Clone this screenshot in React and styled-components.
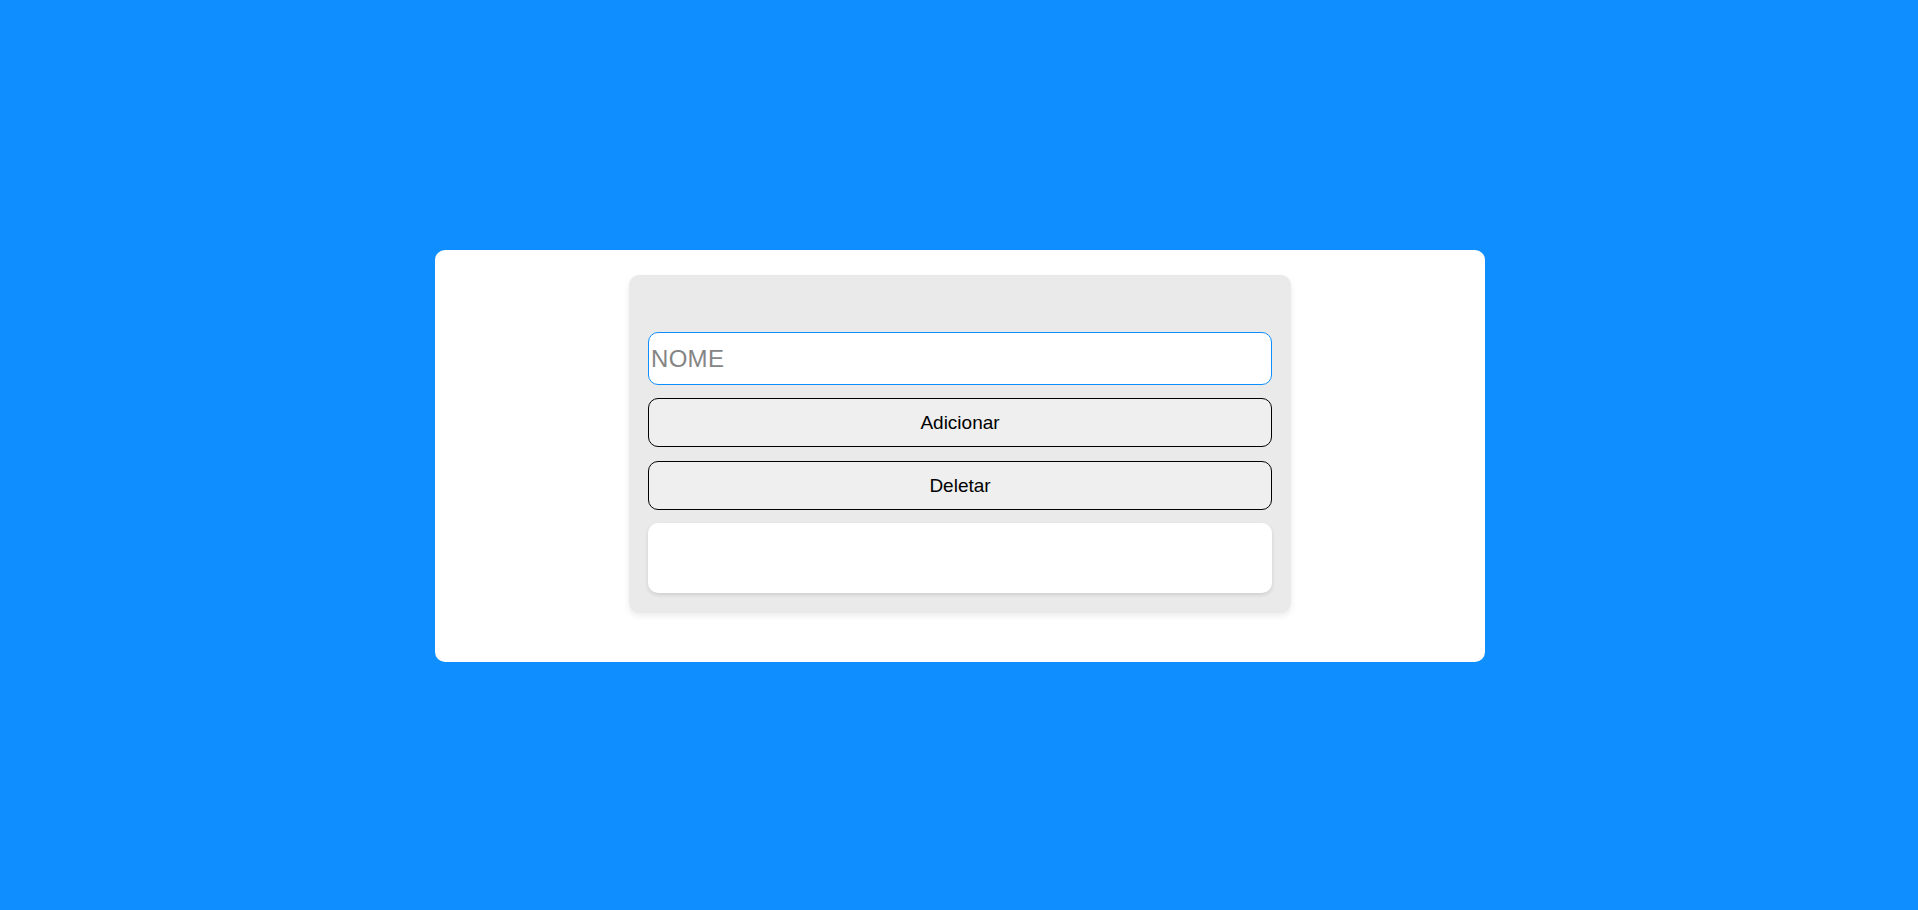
import styled, { createGlobalStyle } from 'styled-components'

const GlobalStyle = createGlobalStyle`
  * { box-sizing: border-box; }
  body {
    margin: 0;
    background: #0f8fff;
    font-family: "Liberation Sans", Arial, sans-serif;
  }
`

export default function App() {
  return (
    <>
      <GlobalStyle />
      <Page>
        <Card>
          <Panel>
            <Field placeholder="NOME" />
            <ActionButton>Adicionar</ActionButton>
            <ActionButton>Deletar</ActionButton>
            <List />
          </Panel>
        </Card>
      </Page>
    </>
  )
}

const Page = styled.div`
  min-height: 100vh;
  padding: 2px 0 0 2px;
  display: flex;
  align-items: center;
  justify-content: center;
`

const Card = styled.div`
  width: 1050px;
  height: 412px;
  background: #fff;
  border-radius: 10px;
  padding-top: 25px;
  display: flex;
  justify-content: center;
  align-items: flex-start;
`

const Panel = styled.div`
  width: 662px;
  background: #eaeaea;
  border-radius: 10px;
  padding: 57px 19px 20px;
  display: flex;
  flex-direction: column;
  gap: 13px;
  box-shadow: 0 3px 6px rgba(0, 0, 0, 0.08);
`

const Field = styled.input`
  height: 53px;
  width: 100%;
  padding: 0 2px;
  border: 1px solid #0f8fff;
  border-radius: 10px;
  background: #fff;
  font-family: "Liberation Sans", Arial, sans-serif;
  font-size: 24px;
  letter-spacing: 0.3px;
  color: #333;
  outline: none;

  &::placeholder {
    color: #858585;
  }
`

const ActionButton = styled.button`
  height: 49px;
  width: 100%;
  border: 1px solid #000;
  border-radius: 10px;
  background: #efefef;
  font-family: "Liberation Sans", Arial, sans-serif;
  font-size: 19px;
  color: #000;
  cursor: pointer;

  & + & {
    margin-top: 1px;
  }
`

const List = styled.div`
  height: 70px;
  background: #fff;
  border-radius: 10px;
  box-shadow: 0 2px 4px rgba(0, 0, 0, 0.12);
`
